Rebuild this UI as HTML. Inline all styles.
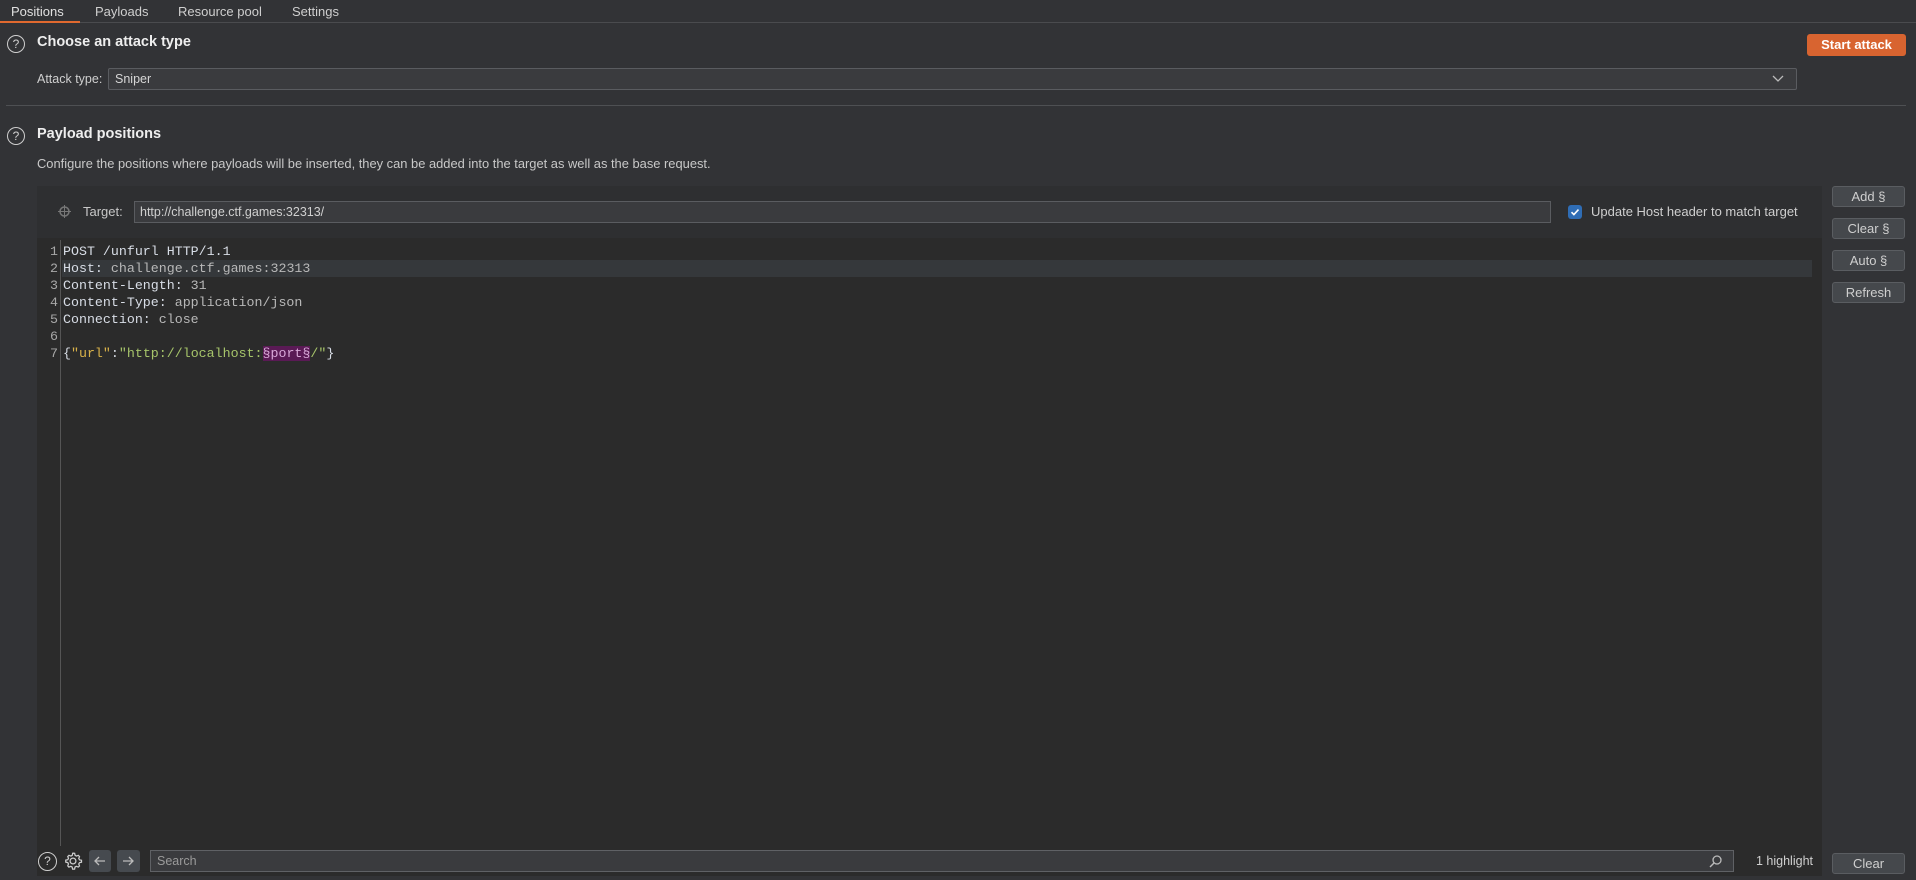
<!DOCTYPE html>
<html><head><meta charset="utf-8"><style>
*{box-sizing:border-box;margin:0;padding:0}
body{width:1916px;height:880px;background:#323336;font-family:"Liberation Sans",sans-serif;color:#d6d6d6;position:relative;overflow:hidden;font-size:13px}
.a{position:absolute}
.tab{position:absolute;top:4px;font-size:13px;color:#cfcfcf}
.help{position:absolute;width:18px;height:18px;border:1.3px solid #cfcfcf;border-radius:50%;font-size:12px;text-align:center;line-height:16px;color:#cfcfcf}
.btn{position:absolute;left:1832px;width:73px;height:21px;background:#45484c;border:1px solid #5a5d61;border-radius:3px;color:#cfcfcf;font-size:13px;text-align:center;line-height:19px}
.code{position:absolute;left:63px;font-family:"Liberation Mono",monospace;font-size:13.3px;color:#d8dde6;white-space:pre;line-height:17px}
.ln{position:absolute;left:40px;width:18px;text-align:right;font-family:"Liberation Mono",monospace;font-size:13.3px;color:#a8a8a8;line-height:17px}
.v{color:#b8b8b8}
</style></head><body>
<div class="a" style="left:0;top:22px;width:1916px;height:1px;background:#4a4b4e"></div>
<div class="tab" style="left:11px;color:#e0e0e0">Positions</div>
<div class="a" style="left:0;top:21px;width:80px;height:2px;background:#e0692f"></div>
<div class="tab" style="left:95px">Payloads</div>
<div class="tab" style="left:178px">Resource pool</div>
<div class="tab" style="left:292px">Settings</div>

<div class="help" style="left:7px;top:35px">?</div>
<div class="a" style="left:37px;top:34px;font-size:14.5px;font-weight:bold;color:#eee">Choose an attack type</div>
<div class="a" style="left:1807px;top:34px;width:99px;height:22px;background:#d86430;border-radius:3px;color:#fff;font-weight:bold;font-size:13px;text-align:center;line-height:22px">Start attack</div>
<div class="a" style="left:37px;top:72px;font-size:12.5px;color:#cfcfcf">Attack type:</div>
<div class="a" style="left:108px;top:68px;width:1689px;height:22px;background:#3a3b3e;border:1px solid #5a5c60;border-radius:2px;padding-left:6px;line-height:20px;font-size:12.5px">Sniper
<svg style="position:absolute;right:12px;top:6px" width="12" height="8"><path d="M1 1l5 5 5-5" stroke="#bbb" fill="none" stroke-width="1.3"/></svg></div>
<div class="a" style="left:6px;top:105px;width:1900px;height:1px;background:#4e5053"></div>

<div class="help" style="left:7px;top:127px">?</div>
<div class="a" style="left:37px;top:126px;font-size:14.5px;font-weight:bold;color:#eee">Payload positions</div>
<div class="a" style="left:37px;top:156px;font-size:12.9px;color:#c8c8c8">Configure the positions where payloads will be inserted, they can be added into the target as well as the base request.</div>

<div class="a" style="left:37px;top:186px;width:1785px;height:690px;background:#2b2b2b"></div>
<div class="a" style="left:37px;top:186px;width:1785px;height:52px;background:#2e2f31"></div>
<svg class="a" style="left:58px;top:205px" width="13" height="13"><circle cx="6.5" cy="6.5" r="4.5" fill="none" stroke="#777" stroke-width="1.5"/><path d="M6.5 0v13M0 6.5h13" stroke="#777" stroke-width="1"/></svg>
<div class="a" style="left:83px;top:204px;font-size:13px;color:#c8c8c8">Target:</div>
<div class="a" style="left:134px;top:201px;width:1417px;height:22px;background:#3a3b3e;border:1px solid #5a5c60;padding-left:5px;line-height:20px;font-size:12.5px;color:#d0d0d0">http://challenge.ctf.games:32313/</div>
<div class="a" style="left:1568px;top:205px;width:14px;height:14px;background:#2f6db5;border-radius:3px"><svg width="14" height="14"><path d="M3.5 7.2l2.4 2.4 4.6-5" stroke="#fff" fill="none" stroke-width="1.6"/></svg></div>
<div class="a" style="left:1591px;top:204px;font-size:13px;color:#cfcfcf">Update Host header to match target</div>

<div class="a" style="left:60px;top:240px;width:1px;height:606px;background:#555"></div>
<div class="a" style="left:62px;top:260px;width:1750px;height:17px;background:#35383b"></div>
<div class="ln" style="top:243px">1<br>2<br>3<br>4<br>5<br>6<br>7</div>
<div class="code" style="top:243px">POST /unfurl HTTP/1.1
Host: <span class="v">challenge.ctf.games:32313</span>
Content-Length: <span class="v">31</span>
Content-Type: <span class="v">application/json</span>
Connection: <span class="v">close</span>

{<span style="color:#d9b24a">"url"</span>:<span style="color:#a6c46a">"http://localhost:</span><span style="background:#5a1a55;color:#d8a8d8">§port§</span><span style="color:#a6c46a">/"</span>}</div>

<div class="btn" style="top:186px">Add §</div>
<div class="btn" style="top:218px">Clear §</div>
<div class="btn" style="top:250px">Auto §</div>
<div class="btn" style="top:282px">Refresh</div>

<div class="help" style="left:38px;top:852px;width:19px;height:19px;line-height:17px">?</div>
<svg class="a" style="left:63px;top:851px" width="20" height="20" viewBox="0 0 24 24"><path d="M12 2.5l2 .3.5 2.4 1.6.9 2.3-.9 1.4 1.5-.9 2.3.9 1.6 2.4.5v2.4l-2.4.5-.9 1.6.9 2.3-1.5 1.4-2.3-.9-1.6.9-.5 2.4h-2.4l-.5-2.4-1.6-.9-2.3.9-1.4-1.5.9-2.3-.9-1.6-2.4-.5v-2.4l2.4-.5.9-1.6-.9-2.3 1.5-1.4 2.3.9 1.6-.9.5-2.4z" fill="none" stroke="#cfcfcf" stroke-width="1.5"/><circle cx="12" cy="12" r="3.5" fill="none" stroke="#cfcfcf" stroke-width="1.5"/></svg>
<div class="a" style="left:89px;top:850px;width:22px;height:22px;background:#464a4f;border-radius:3px"><svg width="22" height="22"><path d="M16 11H6M10 7l-4 4 4 4" stroke="#bbb" fill="none" stroke-width="1.3"/></svg></div>
<div class="a" style="left:117px;top:850px;width:23px;height:22px;background:#464a4f;border-radius:3px"><svg width="23" height="22"><path d="M6 11h10M12 7l4 4-4 4" stroke="#bbb" fill="none" stroke-width="1.3"/></svg></div>
<div class="a" style="left:150px;top:850px;width:1584px;height:22px;background:#3a3b3e;border:1px solid #5f6165;padding-left:6px;line-height:20px;font-size:12.5px;color:#9a9a9a">Search
<svg style="position:absolute;right:11px;top:4px" width="13" height="13"><circle cx="8" cy="5" r="4" fill="none" stroke="#bbb" stroke-width="1.3"/><path d="M5 8L1 12" stroke="#bbb" stroke-width="1.4"/></svg></div>
<div class="a" style="left:1756px;top:854px;font-size:12.5px;color:#cfcfcf">1 highlight</div>
<div class="btn" style="top:853px">Clear</div>
</body></html>
